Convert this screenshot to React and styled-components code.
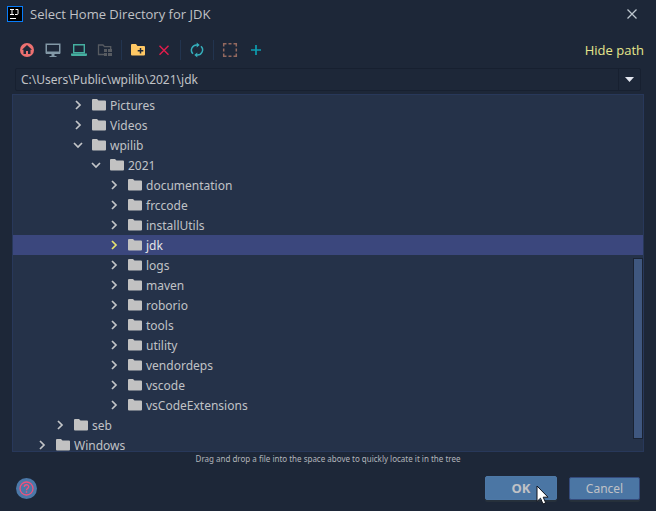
import React, { useState } from "react";
import styled, { createGlobalStyle } from "styled-components";

const Global = createGlobalStyle`
  * { box-sizing: border-box; }
  body {
    margin: 0;
    background: #1d2738;
    color: #c0c2c6;
    font: 12px/20px "Noto Sans", "Open Sans", sans-serif;
  }
  button, input { font: inherit; color: inherit; }
  svg { display: block; }
`;

const Dialog = styled.main`
  display: flex;
  flex-direction: column;
  height: 100vh;
  overflow: hidden;
`;

const TitleBar = styled.header`
  display: flex;
  align-items: center;
  gap: 7px;
  height: 28px;
  padding: 0 12px 0 7px;
`;

const Title = styled.h1`
  flex: 1;
  margin: 0;
  font-family: "Open Sans", "Noto Sans", sans-serif;
  font-size: 13px;
  font-weight: 400;
`;

const IconButton = styled.button`
  display: grid;
  place-items: center;
  width: ${(p) => p.$width || 26}px;
  height: 24px;
  padding: 0;
  border: 0;
  background: transparent;
`;

const Toolbar = styled.div`
  display: flex;
  align-items: center;
  height: 40px;
  padding: 4px 12px 0 14px;
`;

const Separator = styled.span`
  width: 1px;
  height: 20px;
  margin: 0 3px;
  background: #22344f;
`;

const PathLink = styled.a`
  margin-left: auto;
  font-family: "Open Sans", "Noto Sans", sans-serif;
  font-size: 13px;
  color: #e6e68c;
  text-decoration: none;
`;

const PathBox = styled.div`
  display: flex;
  height: 23px;
  margin: 0 15px 3px;
  border: 1px solid #172030;
  border-radius: 2px;
`;

const PathInput = styled.input`
  flex: 1;
  min-width: 0;
  padding: 0 5px;
  border: 0;
  outline: 0;
  background: transparent;
`;

const PathArrow = styled.button`
  display: grid;
  place-items: center;
  width: 22px;
  padding: 0;
  border: 0;
  border-left: 1px solid #172030;
  background: transparent;
`;

const TreePane = styled.section`
  position: relative;
  flex: 1;
  min-height: 0;
  margin: 0 12px;
  overflow: hidden;
  border: 1px solid #28385a;
  background: #253249;
`;

const TreeList = styled.ul`
  margin: 0;
  padding: 0;
  list-style: none;
`;

const TreeRow = styled.li`
  display: flex;
  align-items: center;
  height: 20px;
  padding-left: ${(p) => 21 + p.$depth * 18}px;
  background: ${(p) => (p.$selected ? "#3b477d" : "transparent")};
  color: ${(p) => (p.$selected ? "#e3e4e8" : "inherit")};
`;

const Toggle = styled.button`
  display: grid;
  place-items: center;
  width: 16px;
  height: 16px;
  margin-right: 4px;
  padding: 0;
  border: 0;
  background: transparent;
  color: ${(p) => (p.$selected ? "#e6e36e" : "#c3c5c8")};
`;

const FolderName = styled.span`
  padding: 2px 0 0 2px;
  line-height: 16px;
`;

const ScrollThumb = styled.div`
  position: absolute;
  top: 163px;
  right: 0;
  width: 10px;
  height: 181px;
  border: 1px solid #1a2333;
  background: #3f577f;
`;

const Hint = styled.p`
  margin: 0;
  font-size: 8px;
  line-height: 14px;
  text-align: center;
  color: #b2b5bb;
`;

const Footer = styled.footer`
  display: flex;
  align-items: center;
  gap: 12px;
  padding: 10px 16px 11px;
`;

const HelpButton = styled.button`
  display: grid;
  place-items: center;
  width: 21px;
  height: 21px;
  margin-right: auto;
  padding: 0;
  border: 0;
  border-radius: 50%;
  background: #4b78a8;
`;

const ActionButton = styled.button`
  position: relative;
  width: ${(p) => (p.$primary ? 72 : 71)}px;
  height: ${(p) => (p.$primary ? 24 : 23)}px;
  padding: ${(p) => (p.$primary ? 0 : "1px 0 0")};
  border: 1px solid ${(p) => (p.$primary ? "#4d78a6" : "#344a7c")};
  border-radius: 2px;
  background: #4b76a4;
  box-shadow: 0 2px 0 #26303b;
  line-height: 20px;
  font-size: ${(p) => (p.$primary ? 13 : 12)}px;
  font-weight: ${(p) => (p.$primary ? 700 : 400)};
`;

const Pointer = styled.svg`
  position: absolute;
  top: 8px;
  left: 50px;
  z-index: 1;
`;

const AppLogo = () => (
  <svg width="16" height="16" viewBox="0 0 16 16" aria-hidden="true">
    <path fill="#087cfa" d="M0 0h16v16H0z" />
    <path fill="#000" d="M1 1h14v14H1z" />
    <path fill="none" stroke="#fff" d="M3 3.500h4M5 3v5M3 8.500h4M8.500 3.500h2.500v4q0 1-1 1H8" />
    <path fill="#fff" d="M3 12h6v1H3z" />
  </svg>
);

const glyphs = {
  home: (
    <>
      <circle cx="8" cy="8" r="7" fill="#ec7070" />
      <path fill="#1e2839" d="M8 3 3 7.700h1.500V12H7V9h2v3h2.500V7.700H13z" />
    </>
  ),
  desktop: (
    <>
      <path fill="none" stroke="#8298a6" strokeWidth="1.500" d="M1.250 2.250h13.500v8.500H1.250z" />
      <path fill="#8298a6" d="M1 9.500h14V12H1zM6.500 12h3v2h2v1h-7v-1h2z" />
    </>
  ),
  project: (
    <>
      <path fill="none" stroke="#45afa0" strokeWidth="1.400" d="M2.700 2.700h10.600v8H2.700z" />
      <path fill="#45afa0" d="M0 11.500h16V13q0 1-1 1H1q-1 0-1-1z" />
    </>
  ),
  module: (
    <>
      <path fill="none" stroke="#575b61" strokeWidth="1.300" d="M7 12.500H1.500V3H6l1.500 1.700h6.200V7" />
      <path fill="#575b61" d="M7 7h3v3H7zm4 0h4v3h-4zm-4 4h3v3H7zm4 0h4v3h-4z" />
    </>
  ),
  newFolder: (
    <>
      <path fill="#ffc864" d="M1 3q0-1 1-1h4l1.500 2H14q1 0 1 1v7.500q0 1-1 1H2q-1 0-1-1z" />
      <path stroke="#1e2839" strokeWidth="1.500" d="M10.500 6v5.500M7.700 8.700h5.600" />
    </>
  ),
  remove: <path stroke="#e51c4c" strokeWidth="1.400" d="m3.500 3.800 9 9m0-9-9 9" />,
  refresh: (
    <>
      <path fill="none" stroke="#35aebb" strokeWidth="1.500" d="M4 11.800A5.200 5.200 0 0 1 8 2.900M12 4.200a5.200 5.200 0 0 1-4 8.900" />
      <path fill="#35aebb" d="m7.700.500 3 2.500-3 2.600zM8.300 10.400v5.100l-3-2.500z" />
    </>
  ),
  hidden: (
    <path fill="none" stroke="#93695f" strokeWidth="1.500" d="M1.700 4.500V1.700h2.800M6.500 1.700h3M11.500 1.700h2.800v2.800M14.300 6.500v3M14.300 11.500v2.800h-2.800M9.500 14.300h-3M4.500 14.300H1.700v-2.800M1.700 9.500v-3" />
  ),
  add: <path stroke="#0e9db0" strokeWidth="1.700" d="M8 3v10M3 8h10" />,
};

const Glyph = ({ name }) => (
  <svg width="16" height="16" viewBox="0 0 16 16" aria-hidden="true">
    {glyphs[name]}
  </svg>
);

const Chevron = ({ open }) => (
  <svg width="10" height="10" viewBox="0 0 10 10" fill="none" stroke="currentColor" strokeWidth="1.700" aria-hidden="true">
    <path d={open ? "m1 3 4 4 4-4" : "m3 1 4 4-4 4"} />
  </svg>
);

const Folder = () => (
  <svg width="18" height="16" viewBox="0 0 18 16" aria-hidden="true">
    <path fill="#c2c2c2" d="M2 3q0-1 1-1h4l1.500 1.500H15q1 0 1 1v8q0 1-1 1H3q-1 0-1-1z" />
  </svg>
);

const tools = [
  ["home", "Home directory"],
  ["desktop", "Desktop directory"],
  ["project", "Project directory"],
  ["module", "Module directory"],
  null,
  ["newFolder", "New folder"],
  ["remove", "Delete"],
  null,
  ["refresh", "Refresh"],
  null,
  ["hidden", "Show hidden files"],
  ["add", "Add"],
];

const folders = [
  ["Pictures", 2],
  ["Videos", 2],
  ["wpilib", 2, true],
  ["2021", 3, true],
  ["documentation", 4],
  ["frccode", 4],
  ["installUtils", 4],
  ["jdk", 4],
  ["logs", 4],
  ["maven", 4],
  ["roborio", 4],
  ["tools", 4],
  ["utility", 4],
  ["vendordeps", 4],
  ["vscode", 4],
  ["vsCodeExtensions", 4],
  ["seb", 1],
  ["Windows", 0],
];

export default function App() {
  const [path, setPath] = useState("C:\\Users\\Public\\wpilib\\2021\\jdk");
  const [selected, setSelected] = useState("jdk");

  return (
    <>
      <Global />
      <Dialog>
        <TitleBar>
          <AppLogo />
          <Title>Select Home Directory for JDK</Title>
          <IconButton $width={24} aria-label="Close">
            <svg width="10" height="10" viewBox="0 0 10 10" stroke="#bdc6ce" strokeWidth="1.300" aria-hidden="true">
              <path d="m.500.500 9 9m0-9-9 9" />
            </svg>
          </IconButton>
        </TitleBar>
        <Toolbar role="toolbar" aria-label="Directory actions">
          {tools.map((tool, i) =>
            tool ? (
              <IconButton key={tool[0]} aria-label={tool[1]} disabled={tool[0] === "module"}>
                <Glyph name={tool[0]} />
              </IconButton>
            ) : (
              <Separator key={i} />
            )
          )}
          <PathLink href="#path">Hide path</PathLink>
        </Toolbar>
        <PathBox id="path">
          <PathInput aria-label="Path" value={path} onChange={(e) => setPath(e.target.value)} />
          <PathArrow aria-label="Recent paths">
            <svg width="9" height="5" viewBox="0 0 9 5" aria-hidden="true">
              <path fill="#e4e7f0" d="M0 0h9L4.500 5z" />
            </svg>
          </PathArrow>
        </PathBox>
        <TreePane>
          <TreeList role="tree" aria-label="Directories">
            {folders.map(([name, depth, open]) => {
              const active = name === selected;
              return (
                <TreeRow
                  key={name}
                  role="treeitem"
                  aria-level={depth + 1}
                  aria-expanded={!!open}
                  aria-selected={active}
                  $depth={depth}
                  $selected={active}
                  onClick={() => setSelected(name)}
                >
                  <Toggle $selected={active} aria-label={`Toggle ${name}`}>
                    <Chevron open={open} />
                  </Toggle>
                  <Folder />
                  <FolderName>{name}</FolderName>
                </TreeRow>
              );
            })}
          </TreeList>
          <ScrollThumb />
        </TreePane>
        <Hint>Drag and drop a file into the space above to quickly locate it in the tree</Hint>
        <Footer>
          <HelpButton aria-label="Help">
            <svg width="15" height="15" viewBox="0 0 15 15" fill="none" stroke="#f0527c" aria-hidden="true">
              <circle cx="7.500" cy="7.500" r="6.500" strokeWidth="1.300" />
              <path strokeWidth="1.400" d="M5.300 6c0-3 4.400-2.900 4.400-.2 0 1.700-2.200 1.700-2.200 3.400M7.500 10.300v1.500" />
            </svg>
          </HelpButton>
          <ActionButton $primary>
            OK
            <Pointer width="13" height="20" viewBox="0 0 13 20" aria-hidden="true">
              <path fill="#fff" stroke="#10131c" d="M1 1v15.500l3.500-3.300L7 19l2.700-1.200-2.500-5.600H12z" />
            </Pointer>
          </ActionButton>
          <ActionButton>Cancel</ActionButton>
        </Footer>
      </Dialog>
    </>
  );
}
